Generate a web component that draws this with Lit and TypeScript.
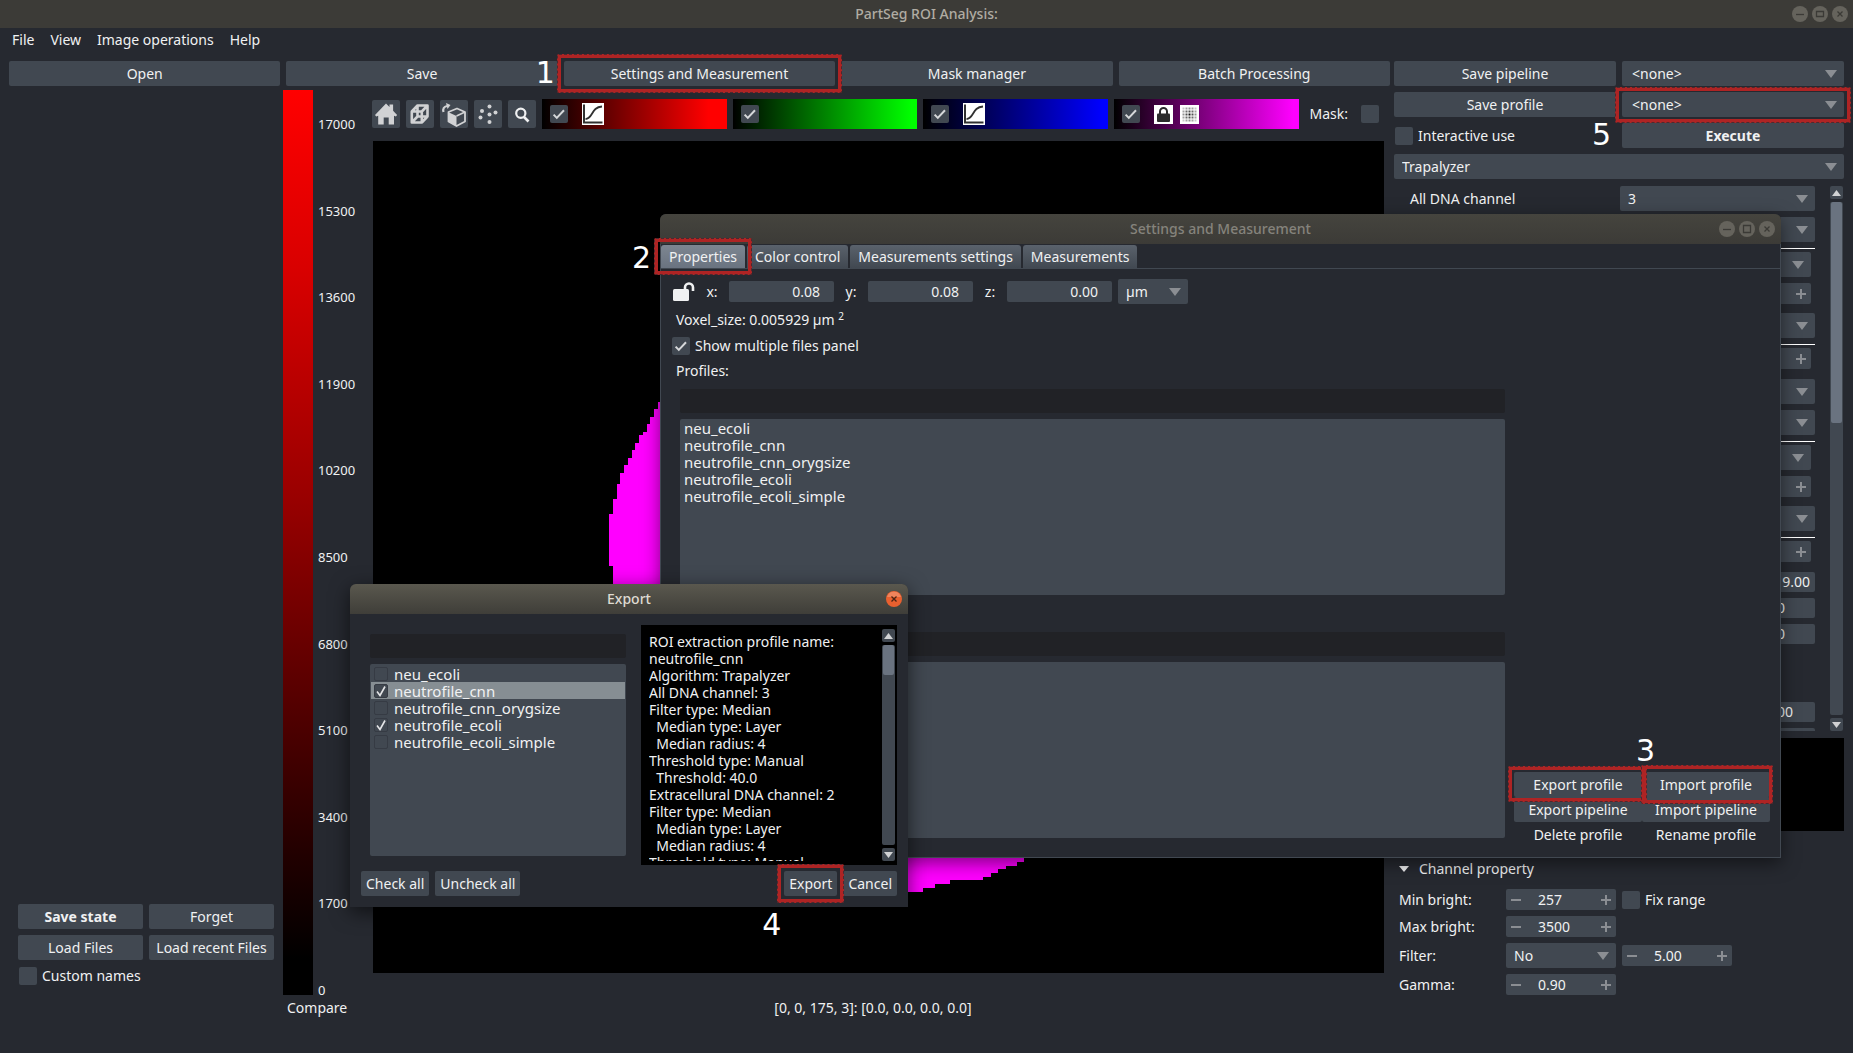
import { LitElement, html, css, svg, nothing } from "lit";
import { customElement } from "lit/decorators.js";
import { classMap } from "lit/directives/class-map.js";

const shared = css`
  * { box-sizing: border-box; }
  button, input, select {
    font: inherit; color: inherit; margin: 0; padding: 0; border: 0; background: none;
    border-radius: 2px; min-width: 0;
  }
  .btn { background: #414851; height: 25px; line-height: 25px; text-align: center; width: 100%; white-space: nowrap; }
  .bold { font-weight: 700; }
  .combo { display: grid; height: 25px; background: #414851; border-radius: 2px; min-width: 0; }
  .combo select { grid-area: 1 / 1; appearance: none; padding-left: 8px; width: 100%; height: 100%; }
  .combo.indent select { padding-left: 10px; }
  .combo svg { grid-area: 1 / 1; justify-self: end; align-self: center; margin-right: 7px; pointer-events: none; }
  .check { display: flex; align-items: center; gap: 5px; white-space: nowrap; }
  .box { display: grid; width: 18px; height: 18px; flex: none; background: #414851; border-radius: 2px; }
  .box input { grid-area: 1 / 1; appearance: none; width: 100%; height: 100%; }
  .box svg { grid-area: 1 / 1; pointer-events: none; }
  .spin { display: flex; align-items: center; height: 21px; background: #414851; border-radius: 2px; padding: 0 5px; }
  .spin input { flex: 1; width: 0; padding-left: 17px; height: 100%; }
  .spin button { width: 10px; height: 10px; display: grid; }
  .mark { position: relative; display: grid; }
  .mark::after {
    content: ""; position: absolute; inset: -7px; z-index: 2; pointer-events: none;
    border: 4px solid #ae2424; border-radius: 2px; outline: 1px dashed #4e292e; outline-offset: -1px;
  }
  .num {
    position: absolute; z-index: 3; font: 30px/30px "DejaVu Sans", sans-serif; color: #fff; pointer-events: none;
  }
  .titlebar { display: grid; grid-template-columns: 1fr auto 1fr; align-items: center; font-weight: 500; }
  .controls { justify-self: end; display: flex; gap: 4px; }
  .controls button { width: 16px; height: 16px; display: grid; }
  .scrollbar { display: flex; flex-direction: column; gap: 3px; }
  .scrollbar button { height: 13px; background: #414851; display: grid; place-items: center; }
  .track { flex: 1; background: #414851; border-radius: 2px; padding: 0 1px; }
  .thumb { background: #6a7380; border-radius: 2px; }
`;

const arrow = svg`<svg width="12" height="8" viewBox="0 0 12 8"><path d="M0 0h12L6 8z" fill="#8b8e93"/></svg>`;
const tick = svg`<svg width="18" height="18" viewBox="0 0 18 18"><path d="M3.6 9.6l3.2 3.3 7.2-7.6" fill="none" stroke="#d6d8da" stroke-width="2"/></svg>`;
const minus = svg`<svg width="10" height="10" viewBox="0 0 10 10"><path d="M0 5h10" stroke="#8b8e93" stroke-width="2"/></svg>`;
const plus = svg`<svg width="10" height="10" viewBox="0 0 10 10"><path d="M0 5h10M5 0v10" stroke="#8b8e93" stroke-width="2"/></svg>`;
const up = svg`<svg width="9" height="6" viewBox="0 0 9 6"><path d="M0 6h9L4.500 0z" fill="#d1d2d4"/></svg>`;
const down = svg`<svg width="9" height="6" viewBox="0 0 9 6"><path d="M0 0h9L4.500 6z" fill="#d1d2d4"/></svg>`;
const glyphs: Record<string, string> = {
  Minimize: "M4 8.500h8",
  Maximize: "M4.500 5.500h7v5h-7z",
  Restore: "M4.500 4.500h7v7h-7z",
  Close: "M5.500 5.500l5 5M10.500 5.500l-5 5",
};

const combo = (label: string, value: string, cls = "") => html`
  <span class="combo ${cls}"><select aria-label=${label}><option>${value}</option></select>${arrow}</span>`;

const check = (text: string, checked = false, name = text) => html`
  <label class="check"><span class="box"><input type="checkbox" aria-label=${name} .checked=${checked}>${checked ? tick : nothing}</span>${text}</label>`;

const spin = (id: string, value: string) => html`
  <span class="spin"><button aria-label="Decrease">${minus}</button><input id=${id || nothing} aria-label=${id ? nothing : "Value"} .value=${value}><button aria-label="Increase">${plus}</button></span>`;

const controls = (names: string[], active = false) => html`
  <span class="controls">${names.map((n) => html`
    <button aria-label=${n}><svg width="16" height="16" viewBox="0 0 16 16">
      <circle cx="8" cy="8" r="8" fill=${active ? "#e9602f" : "#65635c"}></circle>
      ${active ? svg`<path d="M1 6a7.300 7.300 0 0 1 14 0" fill="#f0845c"/>` : nothing}
      <path d=${glyphs[n]} fill="none" stroke=${active ? "#4a2415" : "#3b3a36"} stroke-width="1.300"></path>
    </svg></button>`)}</span>`;

const scrollbar = (thumb: number) => html`
  <div class="scrollbar"><button aria-label="Scroll up">${up}</button>
    <div class="track"><div class="thumb" style="height:${thumb}%"></div></div>
    <button aria-label="Scroll down">${down}</button></div>`;

@customElement("settings-window")
class SettingsWindow extends LitElement {
  static styles = [shared, css`
    :host { display: flex; flex-direction: column; background: #262930; border-radius: 6px 6px 0 0; box-shadow: 0 5px 18px rgba(0, 0, 0, .5); }
    .titlebar { height: 30px; padding: 0 6px; background: linear-gradient(#45443e, #3c3b37); color: #85837c; border-radius: 6px 6px 0 0; }
    .body { flex: 1; min-height: 0; display: flex; flex-direction: column; border: 1px solid #414851; border-top: 0; }
    .tabs { display: flex; gap: 2px; height: 25px; padding-top: 1px; border-bottom: 1px solid #414851; }
    .tab { height: 23px; line-height: 23px; padding: 0 8px; background: linear-gradient(#5a626c, #414851); border-radius: 3px 3px 0 0; white-space: nowrap; width: 100%; }
    .tab.active { background: linear-gradient(#7d8691, #6a7380); }
    .two { left: -29px; top: -2px; }
    .size { display: flex; align-items: center; gap: 10px; height: 25px; margin: 10px 0 0 12px; }
    .size label { width: 14px; text-align: center; }
    .size .field { width: 105px; height: 21px; background: #414851; text-align: right; padding-right: 14px; }
    .size .pair { display: flex; align-items: center; gap: 10px; }
    .size .combo { width: 70px; margin-left: -4px; }
    .line { padding-left: 15px; height: 20px; line-height: 20px; }
    .voxel { margin-top: 6px; }
    .voxel sup { font-size: 10px; line-height: 1; vertical-align: 5px; }
    .show { margin: 7px 0 0 11px; height: 18px; display: flex; }
    .profiles { margin-top: 6px; }
    .columns { flex: 1; min-height: 0; display: flex; gap: 9px; padding: 8px 10px 19px 19px; }
    .lists { flex: 1; display: flex; flex-direction: column; min-width: 0; }
    .search { height: 24px; background: #212226; margin-bottom: 6px; width: 100%; }
    .search.second { margin-top: 37px; }
    ul { flex: 1; margin: 0; padding: 1px 4px; list-style: none; background: #414851; border-radius: 2px; font-size: 15px; line-height: 17px; }
    .actions { align-self: end; display: grid; grid-template-columns: 128px 128px; margin-bottom: -9px; }
    .actions .off { background: none; }
    .actions .mark::after { inset: -6px -5px -5px -6px; }
    .actions .mark.second::after { inset: -7px -3px -7px -1px; }
    .three { left: -6px; top: -36px; }
  `];
  profiles = ["neu_ecoli", "neutrofile_cnn", "neutrofile_cnn_orygsize", "neutrofile_ecoli", "neutrofile_ecoli_simple"];
  render() {
    return html`
      <div class="titlebar"><span></span><span>Settings and Measurement</span>${controls(["Minimize", "Restore", "Close"])}</div>
      <div class="body">
        <div class="tabs" role="tablist">
          <span class="mark"><button role="tab" class="tab active">Properties</button><span class="num two">2</span></span>
          ${["Color control", "Measurements settings", "Measurements"].map((t) => html`<span><button role="tab" class="tab">${t}</button></span>`)}
        </div>
        <div class="size">
          <svg width="22" height="20" viewBox="0 0 22 20"><rect x="0" y="7" width="16" height="12" rx="1.500" fill="#f0f1f2"></rect><path d="M12 8V5.500a4 4 0 0 1 8 0V9" fill="none" stroke="#f0f1f2" stroke-width="2.600"></path></svg>
          ${[["x", "0.08"], ["y", "0.08"], ["z", "0.00"]].map(([a, v]) => html`
            <span class="pair"><label for=${a}>${a}:</label><input class="field" id=${a} .value=${v}></span>`)}
          ${combo("Unit", "µm")}
        </div>
        <div class="line voxel">Voxel_size: 0.005929 µm <sup>2</sup></div>
        <div class="show">${check("Show multiple files panel", true)}</div>
        <div class="line profiles">Profiles:</div>
        <div class="columns">
          <div class="lists">
            <input class="search" aria-label="Filter profiles">
            <ul>${this.profiles.map((p) => html`<li>${p}</li>`)}</ul>
            <input class="search second" aria-label="Filter pipelines">
            <ul></ul>
          </div>
          <div class="actions">
            <span class="mark"><button class="btn">Export profile</button></span>
            <span class="mark second"><button class="btn">Import profile</button><span class="num three">3</span></span>
            <button class="btn">Export pipeline</button><button class="btn">Import pipeline</button>
            <button class="btn off">Delete profile</button><button class="btn off">Rename profile</button>
          </div>
        </div>
      </div>`;
  }
}

@customElement("export-window")
class ExportWindow extends LitElement {
  static styles = [shared, css`
    :host { display: flex; flex-direction: column; background: #262930; border-radius: 6px 6px 0 0; box-shadow: 0 5px 20px rgba(0, 0, 0, .6); }
    .titlebar { height: 30px; padding: 0 6px; background: linear-gradient(#5a584e, #3f3e39); color: #dfdbd2; border-radius: 6px 6px 0 0; }
    .content { flex: 1; min-height: 0; display: grid; grid-template: 1fr / 1fr 1fr; gap: 15px; padding: 11px 11px 6px 20px; }
    .left { min-width: 0; display: flex; flex-direction: column; padding: 9px 0; }
    .search { height: 24px; background: #212226; margin-bottom: 6px; }
    ul { flex: 1; margin: 0; padding: 1px; list-style: none; background: #414851; border-radius: 2px; font-size: 15px; line-height: 16px; }
    li label { display: flex; align-items: center; gap: 6px; height: 17px; padding-left: 3px; }
    li.on { background: #868e93; }
    .box { width: 14px; height: 14px; border: 1px solid #363b44; }
    .preview { min-width: 0; min-height: 0; display: flex; background: #000; padding: 4px 2px 4px 8px; }
    .text { flex: 1; overflow: hidden; margin: 0; padding-top: 4px; line-height: 17px; white-space: pre; }
    .preview .scrollbar { width: 13px; }
    .foot { display: flex; gap: 6px; padding: 0 11px 11px; }
    .foot .btn { padding: 0 5px; }
    .gap { flex: 1; }
    .four { left: -22px; top: 39px; }
  `];
  items: [string, boolean][] = [["neu_ecoli", false], ["neutrofile_cnn", true], ["neutrofile_cnn_orygsize", false], ["neutrofile_ecoli", true], ["neutrofile_ecoli_simple", false]];
  details = ["ROI extraction profile name:", "neutrofile_cnn", "Algorithm: Trapalyzer", "All DNA channel: 3",
    "Filter type: Median", "  Median type: Layer", "  Median radius: 4", "Threshold type: Manual", "  Threshold: 40.0",
    "Extracellural DNA channel: 2", "Filter type: Median", "  Median type: Layer", "  Median radius: 4", "Threshold type: Manual"].join("\n");
  render() {
    return html`
      <div class="titlebar"><span></span><span>Export</span>${controls(["Close"], true)}</div>
      <div class="content">
        <div class="left">
          <input class="search" aria-label="Filter">
          <ul>${this.items.map(([t, c], i) => html`<li class=${classMap({ on: i === 1 })}><label>
            <span class="box"><input type="checkbox" .checked=${c}>${c ? svg`<svg width="12" height="12" viewBox="0 0 12 12"><path d="M2 6.500L5 10.500 10 1.500" fill="none" stroke="#e4e5e7" stroke-width="1.600"/></svg>` : nothing}</span>${t}</label></li>`)}</ul>
        </div>
        <div class="preview"><p class="text">${this.details}</p>${scrollbar(15)}</div>
      </div>
      <div class="foot">
        <span><button class="btn">Check all</button></span><span><button class="btn">Uncheck all</button></span><span class="gap"></span>
        <span class="mark"><button class="btn">Export</button><span class="num four">4</span></span>
        <span><button class="btn">Cancel</button></span>
      </div>`;
  }
}

const curve = svg`<svg width="22" height="22" viewBox="0 0 22 22"><path d="M0 0h22v22H0z" fill="#fff"/><path d="M2 1.500V19.500H20.500" fill="none" stroke="#303030" stroke-width="2"/><path d="M3.500 16C11 16 9 4 20 3.500" fill="none" stroke="#303030" stroke-width="1.800"/></svg>`;
const lock = svg`<svg width="19" height="19" viewBox="0 0 19 19"><path d="M0 0h19v19H0z" fill="#fff"/><rect x="3" y="8.500" width="13" height="8.500" rx="1" fill="#2b2b2b"/><path d="M6 9V6.500a3.500 3.500 0 0 1 7 0V9" fill="none" stroke="#2b2b2b" stroke-width="2"/></svg>`;
const steps = [2, 5, 8, 11, 14];
const dots = svg`<svg width="19" height="19" viewBox="0 0 19 19"><path d="M0 0h19v19H0z" fill="#fff"/>${steps.flatMap((y) => steps.map((x) => {
  const d = Math.hypot(x - 8, y - 8);
  return svg`<rect x=${x + 0.5} y=${y + 0.5} width="2" height="2" fill="#111" opacity=${Math.max(0.2, 1 - d / 11)}></rect>`;
}))}</svg>`;

const tools: [string, unknown][] = [
  ["Home", svg`<path d="M14 3.500l3.500 3.600V4.600h3.600v6.200l4 4.200-1.200 1.500-1.900-.8V24.500h-5.300v-7h-5v7H6.200v-8.800l-2 .8L3 15z" fill="#d1d2d4"/>`],
  ["Grid", svg`<path d="M5.800 11.500h10v11h-10zM11.500 5.500h10v11h-10zM5.800 11.500l5.700-6M15.800 11.500l5.700-6M15.800 22.500l5.700-6M5.800 22.500l5.700-6" fill="none" stroke="#d1d2d4" stroke-width="2.600" stroke-linejoin="round"/>`],
  ["Rotate", svg`<path d="M17 8.500l8 3.500v9.500l-8.500 4.500-8-4.500V12z" fill="none" stroke="#d1d2d4" stroke-width="1.800" stroke-linejoin="round"/><path d="M8 12l8.500 4v10L8 21.500z" fill="#d1d2d4"/><path d="M16.500 16l8.500-4" stroke="#d1d2d4" stroke-width="1.600"/><path d="M3.500 12C2.500 9 4 6.500 7 6" fill="none" stroke="#d1d2d4" stroke-width="2.200"/><path d="M6 3l4.500 2L7.500 9z" fill="#d1d2d4"/>`],
  ["Points", svg`<g fill="#d1d2d4"><circle cx="15.500" cy="6.500" r="2"/><circle cx="8" cy="11" r="2"/><circle cx="15.500" cy="14.500" r="2"/><circle cx="21.500" cy="12.500" r="2"/><circle cx="6.500" cy="17.500" r="2"/><circle cx="15.500" cy="22" r="2"/></g>`],
  ["Search", svg`<circle cx="12.800" cy="13.200" r="4.600" fill="none" stroke="#f0f1f2" stroke-width="2.200"/><path d="M16 17l4.500 4.500" stroke="#f0f1f2" stroke-width="2.600"/>`],
];
const channels: [string, unknown, string][] = [
  ["red", curve, "Channel 1"], ["green", nothing, "Channel 2"], ["blue", curve, "Channel 3"], ["magenta", html`${lock}${dots}`, "Channel 4"],
];

/* kind of control, right-edge variant, value, spacing above */
const params: [string, string, string, number][] = [
  ["combo", "", "", 6], ["rule", "", "", 6], ["combo", "in", "", 3], ["spin", "in", "", 6], ["combo", "", "", 9],
  ["rule", "", "", 6], ["spin", "in", "", 3], ["combo", "", "", 10], ["combo", "", "", 6], ["rule", "", "", 6],
  ["combo", "in", "", 3], ["spin", "in", "", 6], ["combo", "", "", 9], ["rule", "", "", 6], ["spin", "in", "", 3],
  ["field", "", "9.00", 10], ["field", "mid", "0", 6], ["field", "mid", "0", 6], ["field", "low", "00", 58], ["field", "", "", 6],
];

@customElement("app-root")
class AppRoot extends LitElement {
  static styles = [shared, css`
    :host {
      display: flex; flex-direction: column; position: relative; height: 100vh; overflow: hidden;
      background: #262930; color: #f0f1f2; font: 14px/20px "Noto Sans", "Open Sans", sans-serif;
    }
    .titlebar { height: 28px; background: #3c3b37; color: #b0aca3; padding: 0 5px; }
    nav { display: flex; gap: 16px; height: 24px; padding: 2px 12px; }
    nav a { color: inherit; text-decoration: none; }
    main { flex: 1; min-height: 0; display: flex; gap: 4px; padding: 9px 9px 0; }
    .work { flex: 1; min-width: 0; display: flex; flex-direction: column; }
    .top { display: grid; grid-template-columns: repeat(5, 1fr); gap: 6px; }
    .one { left: -28px; top: -3px; }
    .stage { flex: 1; min-height: 0; display: flex; padding: 4px 6px 35px 0; }
    .files { width: 274px; align-self: end; display: grid; grid-template-columns: 1fr 1fr; gap: 6px; padding: 0 9px 32px; }
    .files .check { padding-left: 1px; }
    .scale { width: 89px; display: flex; flex-direction: column; }
    .ramp { flex: 1; display: flex; gap: 5px; }
    .bar { width: 30px; background: linear-gradient(#f00 0, #d80000 20%, #900 45%, #200000 85%, #000 96%); }
    .ticks { display: flex; flex-direction: column; justify-content: space-between; font-size: 13px; line-height: 16px; padding-top: 26px; margin-bottom: -3px; }
    .compare { padding-left: 4px; margin-top: 3px; }
    .view { flex: 1; min-width: 0; display: flex; flex-direction: column; }
    .tools { display: flex; align-items: center; gap: 6px; height: 30px; margin: 9px 5px 12px 0; }
    .tool { width: 28px; height: 28px; background: #414851; flex: none; display: grid; }
    .channel { flex: 1; height: 30px; display: flex; align-items: center; gap: 7px; padding-left: 8px; }
    .channel .check { margin-right: 1px; padding-right: 1px; gap: 10px; }
    .channel .box { margin-right: 5px; }
    .red { background: linear-gradient(90deg, #000, #f00 90%); }
    .green { background: linear-gradient(90deg, #000, #0f0 97%); }
    .blue { background: linear-gradient(90deg, #000, #00f 97%); }
    .magenta { background: linear-gradient(90deg, #000, #f0f 97%); }
    .mask { display: flex; align-items: center; gap: 13px; margin-left: 5px; }
    .canvas { flex: 1; min-height: 0; display: block; margin-left: 1px; background: #000; }
    .status { text-align: center; margin-top: 25px; padding-right: 10px; }
    aside { width: 450px; display: flex; flex-direction: column; }
    .run { display: grid; grid-template-columns: 1fr 1fr; gap: 6px; }
    .run .wide { grid-column: 1 / 3; }
    .run .check { padding-left: 1px; }
    .run .mark::after { inset: -5px -7px -6px -7px; }
    .five { left: -30px; top: 28px; }
    .params { flex: 1; min-height: 0; display: flex; gap: 15px; margin-top: 1px; padding-right: 1px; }
    .rows { flex: 1; overflow: hidden; }
    .row { display: grid; grid-template-columns: 1fr 195px; align-items: center; padding-left: 16px; margin-top: 6px; }
    .param { margin-left: 226px; }
    .param.in { margin-right: 4px; }
    .rule { height: 1px; background: #fff; margin-left: 16px; }
    .param .field { width: 100%; height: 20px; background: #414851; text-align: right; padding-right: 5px; display: block; }
    .param.mid .field { padding-right: 30px; }
    .param.low .field { padding-right: 22px; }
    .params .scrollbar { width: 13px; margin-top: 6px; }
    .preview { height: 93px; background: #000; margin: 7px 0 28px; }
    summary { display: flex; align-items: center; gap: 10px; padding-left: 5px; height: 20px; list-style: none; }
    .props { display: grid; grid-template-columns: 102px 110px 110px; column-gap: 5px; row-gap: 6px; align-items: center; padding-left: 5px; margin: 10px 0 58px; }
    .props .spin, .props .combo { width: 110px; }
    .props .c3 { grid-column: 3; padding-left: 1px; }
    .props .wide { grid-column: 2 / 4; }
    settings-window { position: absolute; left: 660px; top: 214px; width: 1121px; height: 644px; z-index: 4; }
    export-window { position: absolute; left: 350px; top: 584px; width: 558px; height: 323px; z-index: 5; }
  `];
  render() {
    return html`
      <header class="titlebar"><span></span><span>PartSeg ROI Analysis:</span>${controls(["Minimize", "Maximize", "Close"])}</header>
      <nav>${["File", "View", "Image operations", "Help"].map((t) => html`<a href="#">${t}</a>`)}</nav>
      <main>
        <section class="work">
          <div class="top">
            <button class="btn">Open</button><button class="btn">Save</button>
            <span class="mark"><button class="btn">Settings and Measurement</button><span class="num one">1</span></span>
            <button class="btn">Mask manager</button><button class="btn">Batch Processing</button>
          </div>
          <div class="stage">
            <div class="files">
              <button class="btn bold">Save state</button><button class="btn">Forget</button>
              <button class="btn">Load Files</button><button class="btn">Load recent Files</button>
              ${check("Custom names")}
            </div>
            <div class="scale">
              <div class="ramp"><div class="bar"></div>
                <div class="ticks">${Array.from({ length: 11 }, (_, i) => html`<span>${17000 - i * 1700}</span>`)}</div></div>
              <div class="compare">Compare</div>
            </div>
            <div class="view">
              <div class="tools">
                ${tools.map(([n, g]) => html`<button class="tool" aria-label=${n}><svg width="28" height="28" viewBox="0 0 28 28">${g}</svg></button>`)}
                ${channels.map(([c, icons, n]) => html`<div class="channel ${c}">${check("", true, n)}${icons}</div>`)}
                <label class="mask">Mask: <span class="box"><input type="checkbox"></span></label>
              </div>
              <svg class="canvas" viewBox="373 141 1011 832" preserveAspectRatio="xMinYMin slice" shape-rendering="crispEdges">
                <path fill="#f0f" d="M660 402h-2v7h-4v8h-4v7h-3v8h-4v3h-4v8h-4v7h-3v8h-4v7h-4v8h-4v11h-3v15h-4v15h-4v52h4v120h60v206h250v-4h12v-4h15v-4h33v-3h8v-4h7v-4h8v-3h11v-4h7v-4V402z"></path>
              </svg>
              <div class="status">[0, 0, 175, 3]: [0.0, 0.0, 0.0, 0.0]</div>
            </div>
          </div>
        </section>
        <aside>
          <div class="run">
            <button class="btn">Save pipeline</button>${combo("Pipeline", "<none>", "indent")}
            <button class="btn">Save profile</button>
            <span class="mark">${combo("Profile", "<none>", "indent")}<span class="num five">5</span></span>
            ${check("Interactive use")}<button class="btn bold">Execute</button>
            <span class="wide">${combo("Algorithm", "Trapalyzer")}</span>
          </div>
          <div class="params">
            <div class="rows">
              <div class="row"><span>All DNA channel</span>${combo("All DNA channel", "3")}</div>
              ${params.map(([kind, edge, v, gap]) => kind === "rule"
                ? html`<div class="rule" style="margin-top:${gap}px"></div>`
                : html`<div class="param ${edge}" style="margin-top:${gap}px">${
                  kind === "combo" ? combo("Option", v)
                  : kind === "spin" ? spin("", v)
                  : html`<input class="field" aria-label="Value" .value=${v}>`}</div>`)}
            </div>
            ${scrollbar(43)}
          </div>
          <div class="preview"></div>
          <details open>
            <summary><svg width="10" height="6" viewBox="0 0 10 6"><path d="M0 0h10L5 6z" fill="#f0f1f2"></path></svg>Channel property</summary>
            <div class="props">
              <label for="min">Min bright:</label>${spin("min", "257")}<span class="c3">${check("Fix range")}</span>
              <label for="max">Max bright:</label><span class="wide">${spin("max", "3500")}</span>
              <label for="gauss">Filter:</label>${combo("Filter", "No")}<span class="c3">${spin("gauss", "5.00")}</span>
              <label for="gamma">Gamma:</label><span class="wide">${spin("gamma", "0.90")}</span>
            </div>
          </details>
        </aside>
      </main>
      <settings-window></settings-window>
      <export-window></export-window>`;
  }
}
